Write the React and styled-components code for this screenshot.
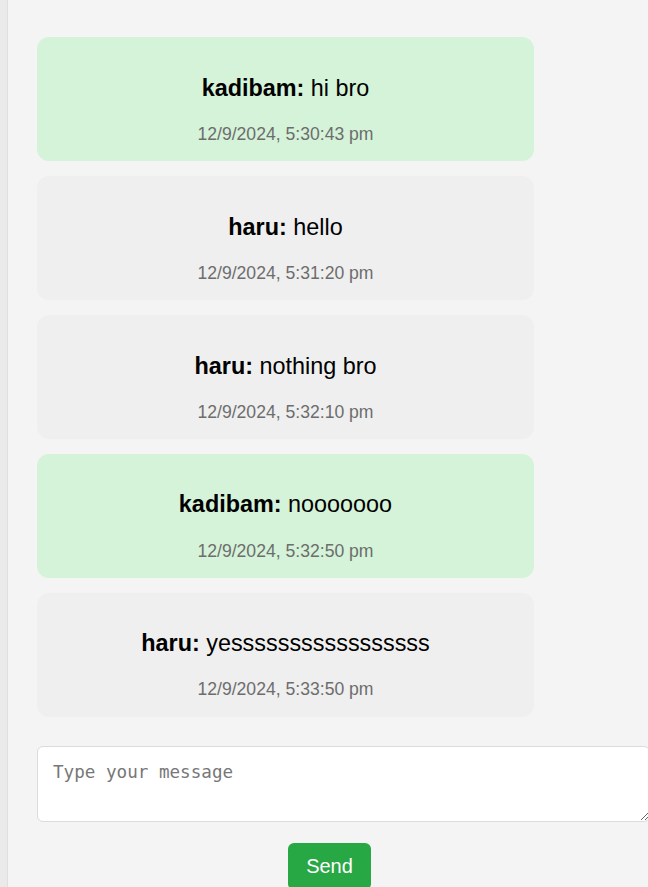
import React from 'react';
import styled, { createGlobalStyle } from 'styled-components';

const GlobalStyle = createGlobalStyle`
  html, body {
    margin: 0;
    padding: 0;
    overflow: hidden;
    background: #f4f4f4;
    font-family: 'Liberation Sans', Arial, sans-serif;
  }
`;

const Page = styled.div`
  display: flex;
  min-height: 100vh;
  width: 100vw;
  overflow: hidden;
`;

const SideEdge = styled.div`
  width: 7px;
  flex-shrink: 0;
  background: #eaeaea;
  border-right: 1px solid #dfdfdf;
`;

const ChatPanel = styled.div`
  flex: 1;
  padding: 37px 0 0 29px;
  background: #f4f4f4;
  overflow: hidden;
`;

const Column = styled.div`
  width: 585px;
  display: flex;
  flex-direction: column;
`;

const MessageList = styled.div`
  display: flex;
  flex-direction: column;
  gap: 14.8px;
`;

const Bubble = styled.div`
  width: 497px;
  box-sizing: border-box;
  padding: 15px 16px 16.2px;
  border-radius: 12px;
  text-align: center;
  background: ${(p) => (p.$mine ? '#d4f3d8' : '#efefef')};
`;

const MessageText = styled.p`
  margin: 22.8px 0 22.1px;
  font-size: 23.4px;
  color: #000;
`;

const Timestamp = styled.span`
  display: block;
  font-size: 17.6px;
  color: #6d6d6d;
`;

const Composer = styled.form`
  margin-top: 29px;
  display: flex;
  flex-direction: column;
`;

const MessageInput = styled.textarea`
  align-self: flex-start;
  width: 613px;
  height: 76px;
  box-sizing: border-box;
  padding: 15px 15px;
  border: 1px solid #dcdcdc;
  border-radius: 6px;
  background: #fff;
  font-family: 'DejaVu Sans Mono', 'Liberation Mono', monospace;
  font-size: 17.6px;
  color: #222;
  resize: both;
  outline: none;

  &::placeholder {
    color: #777;
  }
`;

const SendButton = styled.button`
  align-self: center;
  margin-top: 21.5px;
  padding: 12px 18px;
  border: none;
  border-radius: 6px;
  background: #28a745;
  color: #fff;
  font-family: 'Liberation Sans', Arial, sans-serif;
  font-size: 20px;
  cursor: pointer;
`;

const messages = [
  { user: 'kadibam', text: 'hi bro', time: '12/9/2024, 5:30:43 pm', mine: true },
  { user: 'haru', text: 'hello', time: '12/9/2024, 5:31:20 pm' },
  { user: 'haru', text: 'nothing bro', time: '12/9/2024, 5:32:10 pm' },
  { user: 'kadibam', text: 'nooooooo', time: '12/9/2024, 5:32:50 pm', mine: true },
  { user: 'haru', text: 'yesssssssssssssssss', time: '12/9/2024, 5:33:50 pm' },
];

export default function App() {
  return (
    <>
      <GlobalStyle />
      <Page>
        <SideEdge />
        <ChatPanel>
          <Column>
            <MessageList>
              {messages.map((m, i) => (
                <Bubble key={i} $mine={m.mine}>
                  <MessageText>
                    <strong>{m.user}:</strong> {m.text}
                  </MessageText>
                  <Timestamp>{m.time}</Timestamp>
                </Bubble>
              ))}
            </MessageList>
            <Composer onSubmit={(e) => e.preventDefault()}>
              <MessageInput placeholder="Type your message" />
              <SendButton type="submit">Send</SendButton>
            </Composer>
          </Column>
        </ChatPanel>
      </Page>
    </>
  );
}
